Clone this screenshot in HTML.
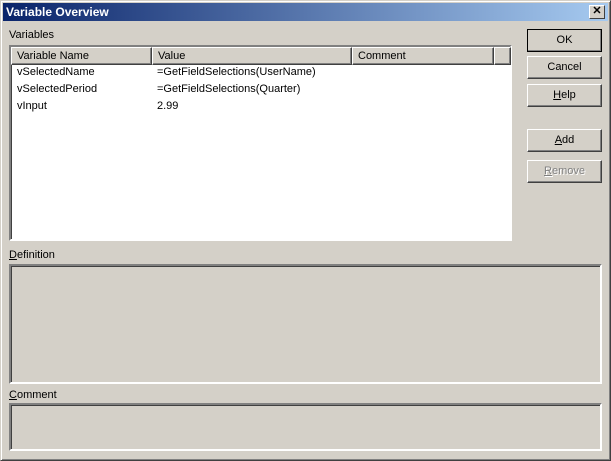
<!DOCTYPE html>
<html><head><style>
*{margin:0;padding:0;box-sizing:border-box}
body{width:611px;height:461px;background:#d4d0c8;font:11px "Liberation Sans",sans-serif;color:#000;position:relative;overflow:hidden}
.frame{position:absolute;left:0;top:0;width:611px;height:461px;border:1px solid;border-color:#d4d0c8 #404040 #404040 #d4d0c8;box-shadow:inset 1px 1px #fff,inset -1px -1px #808080}
.title{position:absolute;left:3px;top:3px;width:605px;height:18px;background:linear-gradient(90deg,#0a246a,#a6caf0);color:#fff;font-weight:bold;font-size:12px;line-height:18px;padding-left:3px}
.x{position:absolute;left:589px;top:5px;width:16px;height:14px;background:#d4d0c8;border:1px solid;border-color:#fff #404040 #404040 #fff;font-size:11px;font-weight:bold;line-height:11px;text-align:center;color:#000}
.a{position:absolute}
.sunk{border:2px solid;border-color:#808080 #fff #fff #808080;box-shadow:inset 1px 1px #404040}
.btn{position:absolute;left:527px;width:75px;height:23px;border:1px solid;border-color:#fff #404040 #404040 #fff;box-shadow:inset -1px -1px #808080;text-align:center;line-height:21px}
.hd{position:absolute;top:0;height:18px;background:#d4d0c8;border:1px solid;border-color:#fff #404040 #404040 #fff;box-shadow:inset -1px -1px #808080;padding-left:5px;line-height:16px}
.row{position:absolute;left:17px}
u{text-decoration:underline}
</style></head><body>
<div class="frame"></div>
<div class="title">Variable Overview</div>
<div class="x">✕</div>
<div class="a" style="left:9px;top:29px">Variables</div>
<div class="a sunk" style="left:9px;top:45px;width:503px;height:196px;background:#fff">
 <div class="hd" style="left:0;width:141px">Variable Name</div>
 <div class="hd" style="left:141px;width:200px">Value</div>
 <div class="hd" style="left:341px;width:142px">Comment</div>
 <div class="hd" style="left:483px;width:17px"></div>
 <div class="row" style="top:19px;left:6px">vSelectedName</div><div class="row" style="top:19px;left:146px">=GetFieldSelections(UserName)</div>
 <div class="row" style="top:36px;left:6px">vSelectedPeriod</div><div class="row" style="top:36px;left:146px">=GetFieldSelections(Quarter)</div>
 <div class="row" style="top:53px;left:6px">vInput</div><div class="row" style="top:53px;left:146px">2.99</div>
</div>
<div class="a" style="left:9px;top:249px"><u>D</u>efinition</div>
<div class="a sunk" style="left:9px;top:264px;width:593px;height:120px"></div>
<div class="a" style="left:9px;top:389px"><u>C</u>omment</div>
<div class="a sunk" style="left:9px;top:403px;width:593px;height:48px"></div>
<div class="btn" style="top:29px;outline:1px solid #000;outline-offset:-1px">OK</div>
<div class="btn" style="top:56px">Cancel</div>
<div class="btn" style="top:84px"><u>H</u>elp</div>
<div class="btn" style="top:129px"><u>A</u>dd</div>
<div class="btn" style="top:160px;color:#808080;text-shadow:1px 1px #fff"><u>R</u>emove</div>
</body></html>
